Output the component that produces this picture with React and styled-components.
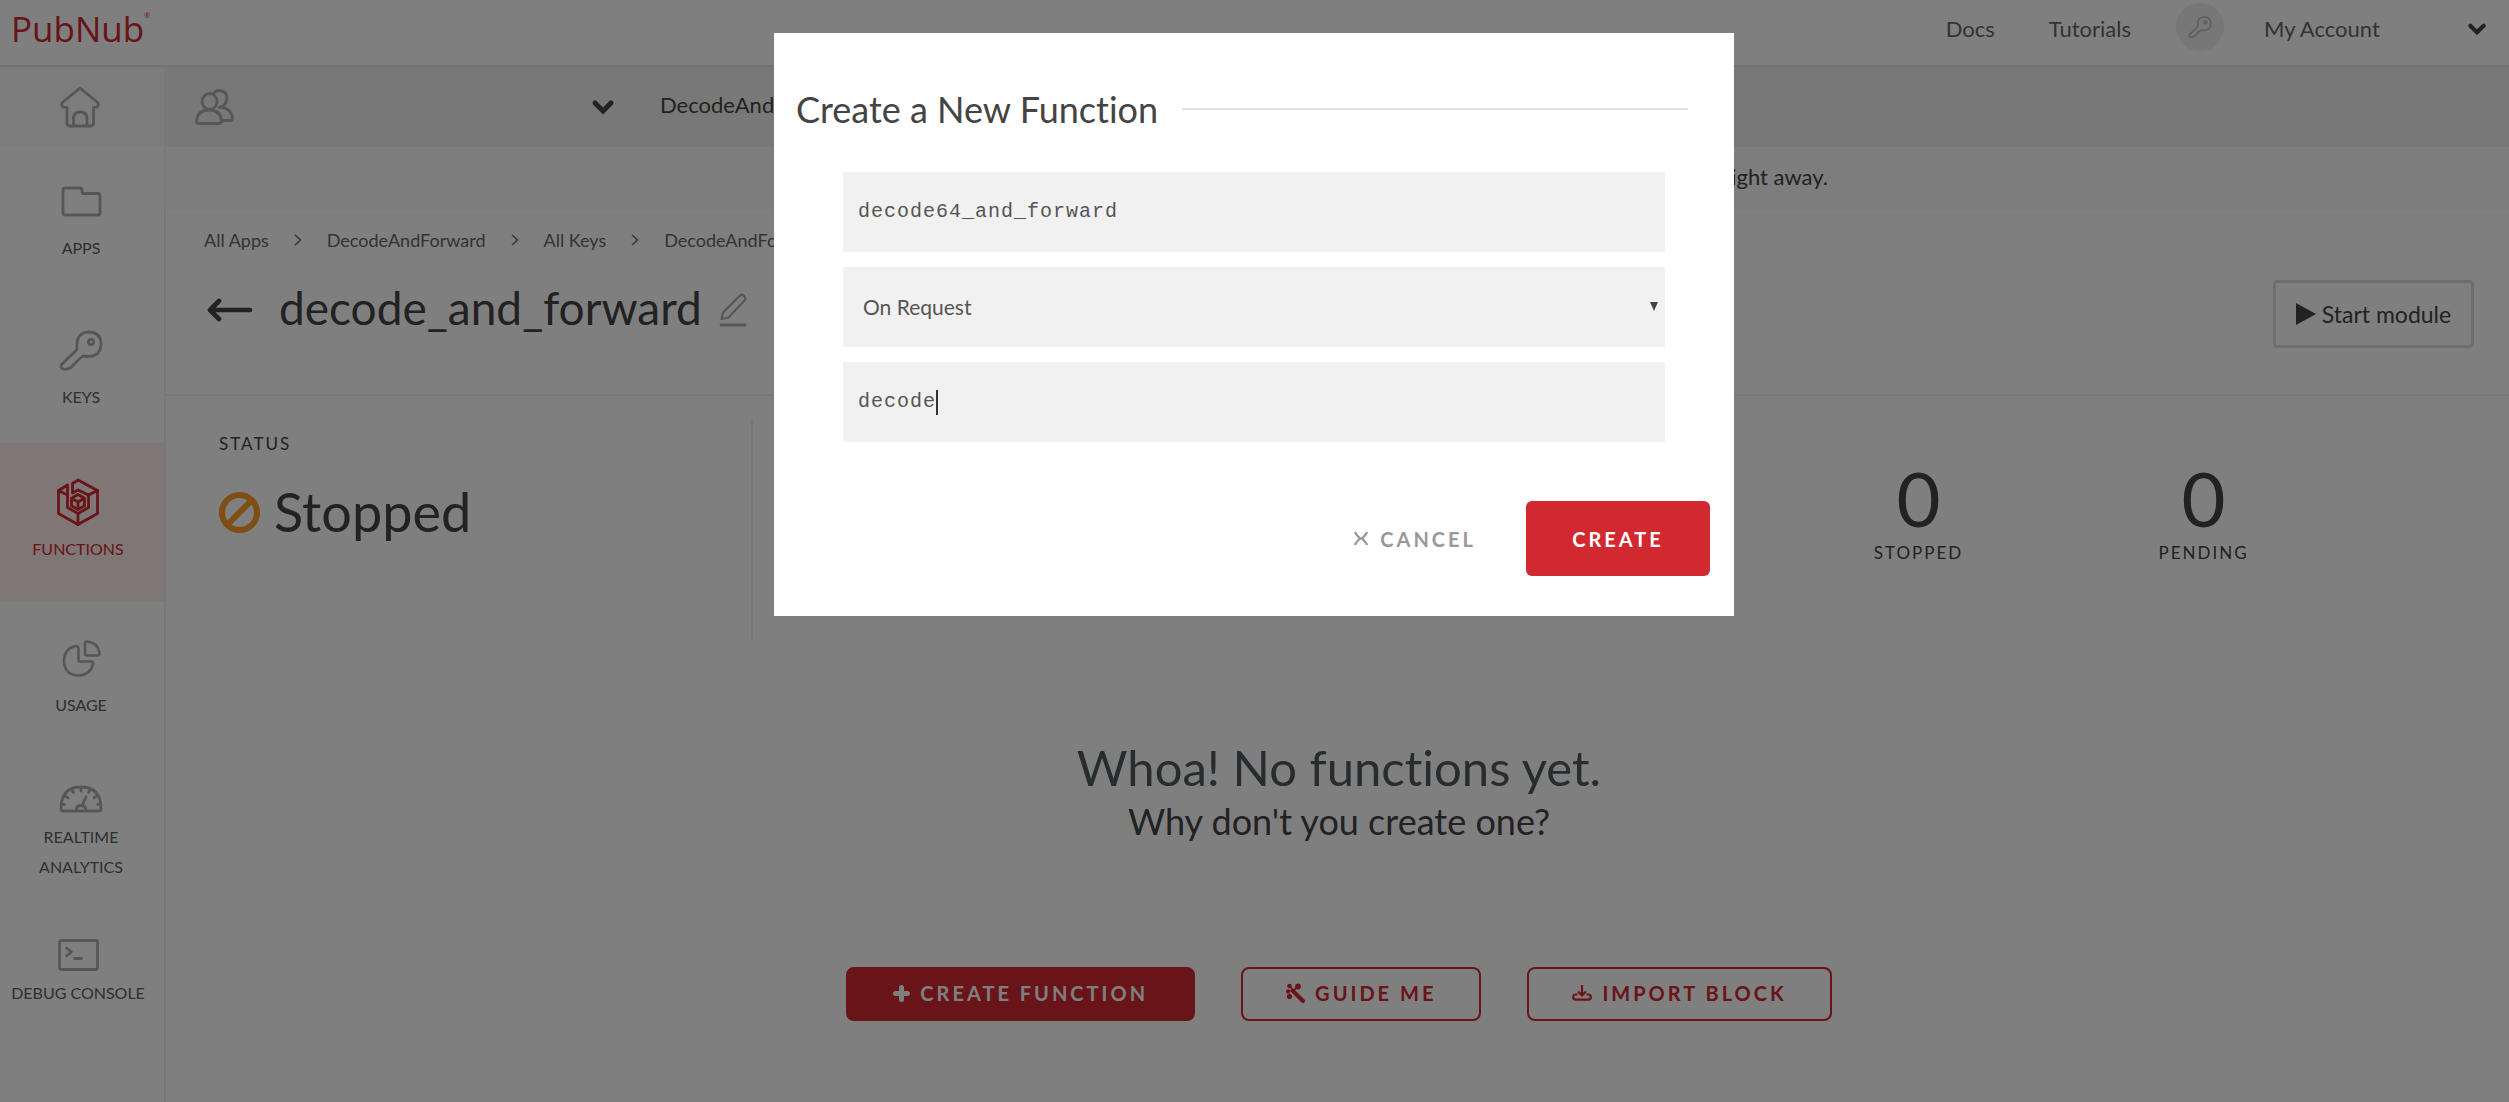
import React from "react";
import styled, { createGlobalStyle, css } from "styled-components";

const sans = `Lato, "Liberation Sans", sans-serif`;
const mono = `"Liberation Mono", monospace`;
const red = "#d22830";

const GlobalStyle = createGlobalStyle`
  *, *::before, *::after { box-sizing: border-box; }
  body {
    margin: 0;
    background: #fff;
    font-family: ${sans};
    font-variant-ligatures: none;
    color: #444;
  }
  button, input, select { font-family: inherit; color: inherit; margin: 0; }
  a { color: inherit; text-decoration: none; }
  svg { display: block; flex: none; }
`;

const Page = styled.div`
  min-height: 100vh;
  display: flex;
  flex-direction: column;
`;

/* ---------- top bar ---------- */

const TopBar = styled.header`
  display: flex;
  align-items: flex-start;
  justify-content: space-between;
  height: 67px;
  padding: 0 22px 0 11px;
  border-bottom: 2px solid #e4e4e4;
`;

const Logo = styled.a`
  display: flex;
  align-items: flex-start;
  font: 500 35px/57px "Open Sans", "Noto Sans", sans-serif;
  color: ${red};
  sup {
    font-size: 7px;
    line-height: 32px;
  }
`;

const TopNav = styled.nav`
  display: flex;
  align-items: center;
  height: 57px;
  font-size: 22px;
  color: #666;
`;

const DocsLink = styled.a`
  margin-right: 54px;
`;

const TutorialsLink = styled.a`
  margin-right: 45px;
`;

const Avatar = styled.span`
  display: flex;
  align-items: center;
  justify-content: center;
  width: 48px;
  height: 48px;
  margin: 0 40px 4px 0;
  border-radius: 50%;
  background: #eee;
`;

const AccountButton = styled.button`
  display: flex;
  align-items: center;
  justify-content: space-between;
  width: 223px;
  padding: 0;
  border: 0;
  background: none;
  font-size: 22px;
`;

/* ---------- side bar ---------- */

const Body = styled.div`
  display: flex;
  flex: 1;
`;

const SideBar = styled.nav`
  flex: none;
  width: 166px;
  border-right: 2px solid #f0f0f0;
`;

const HomeLink = styled.a`
  display: flex;
  align-items: center;
  height: 80px;
  padding-left: 60px;
  background: #f8f8f8;
  color: #adadad;
`;

const SideItem = styled.a`
  display: flex;
  flex-direction: column;
  align-items: center;
  gap: ${(p) => (p.$compact ? 0 : 8)}px;
  padding: ${(p) => p.$top}px ${(p) => (p.$shift ? 8 : 2)}px ${(p) => p.$bottom}px 0;
  font-size: 16px;
  line-height: 30px;
  text-align: center;
  white-space: nowrap;
  color: #606060;
  ${(p) =>
    p.$active &&
    css`
      background: #ffeded;
      color: ${red};
    `}
`;

const SideIcon = styled.span`
  display: flex;
  align-items: center;
  justify-content: center;
  height: ${(p) => (p.$compact ? 46 : 48)}px;
  color: ${(p) => (p.$active ? red : "#adadad")};
`;

/* ---------- main column ---------- */

const Main = styled.main`
  flex: 1;
  min-width: 0;
`;

const AppBar = styled.div`
  display: flex;
  align-items: center;
  height: 80px;
  padding-left: 29px;
  background: #f0f0f0;
`;

const TeamPicker = styled.button`
  display: flex;
  align-items: center;
  justify-content: space-between;
  width: 420px;
  padding: 0;
  border: 0;
  background: none;
  color: #adadad;
`;

const AppName = styled.span`
  margin-left: 45px;
  padding-bottom: 6px;
  font-size: 22px;
`;

const Notice = styled.div`
  height: 63px;
  padding-right: 681px;
  background: #fafafa;
  font-size: 22px;
  line-height: 59px;
  text-align: right;
`;

const ModuleHeader = styled.section`
  display: flex;
  justify-content: space-between;
  height: 186px;
  padding: 16px 35px 0 38px;
  border-bottom: 2px solid #f0f0f0;
`;

const Crumbs = styled.nav`
  display: flex;
  align-items: center;
  gap: 25px;
  height: 28px;
  font-size: 18px;
  color: #666;
`;

const TitleRow = styled.div`
  display: flex;
  align-items: center;
  height: 60px;
  margin-top: 26px;
  padding-left: 3px;
`;

const Title = styled.h1`
  margin: 0 17px 4px 26px;
  font-size: 46px;
  font-weight: 400;
  line-height: 60px;
`;

const PlainIconButton = styled.button`
  display: flex;
  padding: 0;
  border: 0;
  background: none;
`;

const StartButton = styled.button`
  display: flex;
  align-items: center;
  justify-content: center;
  gap: 6px;
  width: 201px;
  height: 68px;
  margin-top: 54px;
  padding: 0;
  border: 3px solid #dcdcdc;
  border-radius: 4px;
  background: none;
  font-size: 23px;
`;

const StatusRow = styled.section`
  display: flex;
  align-items: stretch;
  height: 221px;
  margin-top: 24px;
`;

const StatusPanel = styled.div`
  width: 587px;
  padding: 9px 0 0 53px;
  border-right: 2px solid #f0f0f0;
`;

const Caption = styled.div`
  font-size: 17px;
  line-height: 30px;
  letter-spacing: 2px;
`;

const StatusValue = styled.div`
  display: flex;
  align-items: center;
  gap: 14px;
  margin-top: 17px;
  font-size: 54px;
  line-height: 72px;
`;

const Stats = styled.div`
  display: flex;
  flex: 1;
  justify-content: flex-end;
  padding: 37px 163px 0 0;
`;

const Stat = styled.div`
  width: 285px;
  text-align: center;
`;

const StatValue = styled.div`
  font-size: 76px;
  line-height: 81px;
`;

const Empty = styled.section`
  display: flex;
  flex-direction: column;
  align-items: center;
  padding: 90px 0 0 3px;
`;

const EmptyTitle = styled.h2`
  margin: 0;
  font-size: 49px;
  font-weight: 400;
  line-height: 72px;
  color: #4f585e;
`;

const EmptyText = styled.p`
  margin: 0;
  font-size: 36px;
  line-height: 36px;
`;

const Actions = styled.div`
  display: flex;
  gap: 46px;
  margin-top: 128px;
`;

const Action = styled.button`
  display: flex;
  align-items: center;
  gap: 10px;
  height: 54px;
  padding: 0 ${(p) => (p.$solid ? 45 : 43)}px 2px;
  border: 2px solid ${red};
  border-radius: 8px;
  background: ${(p) => (p.$solid ? red : "none")};
  color: ${(p) => (p.$solid ? "#fff" : red)};
  font-size: 20px;
  font-weight: 700;
  letter-spacing: 3px;
`;

/* ---------- dialog ---------- */

const Backdrop = styled.div`
  position: fixed;
  inset: 0;
  display: flex;
  align-items: flex-start;
  justify-content: center;
  padding: 33px 1px 0 0;
  background: rgba(0, 0, 0, 0.5);
`;

const Dialog = styled.form`
  width: 960px;
  padding: 46px 24px 40px 22px;
  background: #fff;
`;

const DialogTitle = styled.h2`
  display: flex;
  align-items: center;
  gap: 24px;
  margin: 0 22px 0 0;
  font-size: 36px;
  font-weight: 400;
  line-height: 60px;
  &::after {
    content: "";
    flex: 1;
    height: 2px;
    background: #e2e2e2;
  }
`;

const Fields = styled.div`
  display: flex;
  flex-direction: column;
  gap: 15px;
  margin: 33px 45px 0 47px;
`;

const Field = styled.label`
  display: flex;
  align-items: center;
  height: 80px;
  padding: 0 7px 0 15px;
  background: #f1f1f1;
  color: #555;
`;

const TextInput = styled.input`
  field-sizing: content;
  padding: 0;
  border: 0;
  outline: 0;
  background: none;
  font: 400 20px/24px ${mono};
  letter-spacing: 1px;
  caret-color: transparent;
`;

const Caret = styled.span`
  width: 2px;
  height: 25px;
  background: #333;
`;

const Select = styled.select`
  flex: 1;
  appearance: none;
  padding: 0 0 0 5px;
  border: 0;
  outline: 0;
  background: none;
  font-size: 21px;
  line-height: 28px;
`;

const DialogActions = styled.div`
  display: flex;
  align-items: center;
  justify-content: flex-end;
  gap: 50px;
  margin-top: 59px;
`;

const CancelButton = styled.button`
  display: flex;
  align-items: center;
  gap: 12px;
  padding: 0;
  border: 0;
  background: none;
  color: #999;
  font-size: 20px;
  font-weight: 700;
  letter-spacing: 3px;
`;

const CreateButton = styled.button`
  width: 184px;
  height: 75px;
  padding: 0;
  border: 0;
  border-radius: 6px;
  background: ${red};
  color: #fff;
  font-size: 20px;
  font-weight: 700;
  letter-spacing: 3px;
`;

/* ---------- icons ---------- */

const Line = ({ w, h, sw = 2.8, children, ...rest }) => (
  <svg
    width={w}
    height={h}
    viewBox={`0 0 ${w} ${h}`}
    fill="none"
    stroke="currentColor"
    strokeWidth={sw}
    strokeLinecap="round"
    strokeLinejoin="round"
    aria-hidden="true"
    {...rest}
  >
    {children}
  </svg>
);

const HomeIcon = () => (
  <Line w={40} h={42}>
    <path d="M20 2 L37 16 Q39.500 18.500 37.500 20.500 Q36.500 21.500 33.500 21.500 V37 Q33.500 40 30.500 40 H10 Q7 40 7 37 V21.500 Q3.500 21.500 2.500 20.500 Q.5 18.500 3 16 Z" />
    <path d="M13.500 40 V32 Q14 26 20 26 Q26.500 26 27 32 V40" />
  </Line>
);

const FolderIcon = () => (
  <Line w={41} h={31}>
    <path d="M4 2 H19 Q21 2 21 4 V6 Q21 7.500 22.500 7.500 H37 Q39 7.500 39 9.500 V27 Q39 29 37 29 H4 Q2 29 2 27 V4 Q2 2 4 2 Z" />
  </Line>
);

const KeyShape = () => (
  <>
    <path d="M18 18 Q16.500 2.500 30 2 Q42 2.500 42 14 Q41.500 29 24 26 Q22.500 26.500 12 37.500 Q7 40.500 3 38.500 Q1 36 3 34 L17.500 20 Q18.200 19 18 18 Z" />
    <circle cx="32" cy="12" r="2.600" />
  </>
);

const KeyIcon = () => (
  <Line w={44} h={41}>
    <KeyShape />
  </Line>
);

const SmallKeyIcon = () => (
  <Line w={24} h={24} viewBox="0 0 44 41" style={{ color: "#b8b8b8" }}>
    <KeyShape />
  </Line>
);

const CubeIcon = () => (
  <Line w={42} h={48}>
    <path d="M15.500 15 V5.500 L21 2 L40.500 12.500 V35.500 L21 46.500 L1.500 35.500 V12.500 L10.500 7 V29.500 L21 35.500 L31.500 29.500 V17 L21 12 L15.500 15" />
    <path d="M21 35.500 V46.500 M31.500 17 L40.500 12.500 M1.500 12.500 L10.500 17" />
    <path d="M21 16.500 L27.500 20.300 V27.700 L21 31.500 L14.500 27.700 V20.300 Z M14.500 20.300 L21 24 L27.500 20.300 M21 24 V31.500" />
  </Line>
);

const PieIcon = () => (
  <Line w={39} h={37} sw={2.6}>
    <path d="M14 6 Q16.500 6 16.500 8.500 V20.500 Q16.500 21.500 17.500 21.500 H29.500 Q31.500 21.500 31 24 Q28.500 35 16.500 35.500 Q2.500 35 2 21 Q2.500 8 14 6 Z" />
    <path d="M23 3.500 Q23 1.500 25 1.500 Q36.500 3 37.500 13.500 Q37.500 15.500 35.500 15.500 H25 Q23 15.500 23 13.500 Z" />
  </Line>
);

const GaugeIcon = () => (
  <Line w={44} h={28}>
    <path d="M2 24 Q2 2 22 2 Q42 2 42 24 Q42 26 40 26 H4 Q2 26 2 24 Z" />
    <path d="M17 25 Q17.500 20.500 22 20.500 Q26.500 20.500 27 25 M23 21 L27 12" />
    <path d="M22 3 V6 M13 5 L14.500 7.500 M31 5 L29.500 7.500 M6.500 11 L9 13 M37.500 11 L35 13 M3 19 L5.500 19.500 M41 19 L38.500 19.500" />
  </Line>
);

const ConsoleIcon = () => (
  <Line w={41} h={32}>
    <rect x="1.500" y="1.500" width="38" height="29" rx="2" />
    <path d="M8.500 9 L13.500 13 L8.500 17 M16.500 19.500 H23.500" />
  </Line>
);

const TeamIcon = () => (
  <Line w={39} h={36} sw={2.8}>
    <ellipse cx="14.500" cy="12.500" rx="7.500" ry="8" />
    <path d="M1.500 32 Q2.500 21 14 21 Q25.500 21 26.500 32 Q26.500 34.500 24.500 34.500 H3.500 Q1.500 34.500 1.500 32 Z" />
    <path d="M19 4 Q21 1.500 24.500 1.500 Q32 2.500 32 9 Q31 17.500 24 18.500 M26 18 Q36.500 20 37.500 29 Q37.500 31.500 35.500 31.500 H28" />
  </Line>
);

const DownIcon = ({ w = 24, h = 16, sw = 5 }) => (
  <Line w={w} h={h} sw={sw} viewBox="0 0 24 16" strokeLinejoin="miter" style={{ color: "#444" }}>
    <path d="M4 4 L12 12 L20 4" />
  </Line>
);

const CrumbIcon = () => (
  <Line w={8} h={12} sw={1.4} strokeLinecap="butt" strokeLinejoin="miter">
    <path d="M1 1 L6.500 6 L1 11" />
  </Line>
);

const BackIcon = () => (
  <Line w={46} h={24} sw={4.6}>
    <path d="M43 12 H4 M12 3 L3 12 L12 21" />
  </Line>
);

const PencilIcon = () => (
  <Line w={28} h={34} sw={2.2} style={{ color: "#adadad" }}>
    <path d="M2.500 26 L4 19.500 L21 2.500 Q23 1 24.500 2.500 L26 4.500 Q27 6 25.500 7.500 L9.500 24.500 Z" />
    <path d="M2 32 H26" strokeWidth="2.800" />
  </Line>
);

const PlayIcon = () => (
  <svg width="20" height="22" viewBox="0 0 20 22" fill="#444" aria-hidden="true">
    <path d="M0 0 L20 11 L0 22 Z" />
  </svg>
);

const StoppedIcon = () => (
  <Line w={41} h={41} sw={6} style={{ color: "#ff9c28" }}>
    <circle cx="20.500" cy="20.500" r="17.500" />
    <path d="M9 32 L32 9" />
  </Line>
);

const PlusIcon = () => (
  <Line w={17} h={17} sw={5}>
    <path d="M8.500 2.500 V14.500 M2.500 8.500 H14.500" />
  </Line>
);

const WandIcon = () => (
  <svg width="19" height="20" viewBox="0 0 19 20" fill="currentColor" stroke="currentColor" aria-hidden="true">
    <path d="M6.500 7.500 L17 18" strokeWidth="4" strokeLinecap="round" />
    <circle cx="3.500" cy="3" r="2.300" stroke="none" />
    <circle cx="12" cy="3.500" r="2.900" stroke="none" />
    <circle cx="2.200" cy="8.500" r="2.200" stroke="none" />
    <circle cx="3.500" cy="13.500" r="2.600" stroke="none" />
    <path d="M4 3.500 L7.500 7.500 L11.500 4" fill="none" strokeWidth="1.800" />
  </svg>
);

const ImportIcon = () => (
  <svg width="20" height="16" viewBox="0 0 20 16" fill="none" stroke="currentColor" strokeWidth="2.200" aria-hidden="true">
    <path d="M10 0 V10 M6 6.500 L10 10.500 L14 6.500" />
    <path d="M5.500 9.500 H3.500 Q1.200 9.500 1.200 12 Q1.200 14.600 3.500 14.600 H16.500 Q18.800 14.600 18.800 12 Q18.800 9.500 16.500 9.500 H14.500" />
  </svg>
);

const CrossIcon = () => (
  <Line w={14} h={15} sw={2.4} strokeLinecap="butt">
    <path d="M1 1 Q1.500 3 6 7.500 Q1.500 12 1 14 M13 1 Q12.500 3 8 7.500 Q12.500 12 13 14 M6 7.500 H8" />
  </Line>
);

const ArrowMark = () => (
  <svg width="8" height="10" viewBox="0 0 8 10" fill="#444" aria-hidden="true">
    <path d="M0 0 H8 L4 9 Z" />
  </svg>
);

/* ---------- page ---------- */

const sideItems = [
  { label: "APPS", Icon: FolderIcon, top: 30, bottom: 28 },
  { label: "KEYS", Icon: KeyIcon, top: 35, bottom: 31 },
  { label: "FUNCTIONS", Icon: CubeIcon, top: 35, bottom: 37, active: true, shift: true },
  { label: "USAGE", Icon: PieIcon, top: 33, bottom: 28 },
  { label: <>REALTIME<br />ANALYTICS</>, key: "REALTIME", Icon: GaugeIcon, top: 28, bottom: 30, compact: true },
  { label: "DEBUG CONSOLE", Icon: ConsoleIcon, top: 20, bottom: 28, compact: true, shift: true },
];

const crumbs = ["All Apps", "DecodeAndForward", "All Keys", "DecodeAndForward"];

export default function App() {
  const [name, setName] = React.useState("decode64_and_forward");
  const [path, setPath] = React.useState("decode");

  return (
    <>
      <GlobalStyle />
      <Page>
        <TopBar>
          <Logo href="#">
            PubNub<sup>®</sup>
          </Logo>
          <TopNav>
            <DocsLink href="#">Docs</DocsLink>
            <TutorialsLink href="#">Tutorials</TutorialsLink>
            <Avatar>
              <SmallKeyIcon />
            </Avatar>
            <AccountButton type="button">
              My Account
              <DownIcon w={20} h={14} />
            </AccountButton>
          </TopNav>
        </TopBar>

        <Body>
          <SideBar>
            <HomeLink href="#" aria-label="Home">
              <HomeIcon />
            </HomeLink>
            {sideItems.map(({ label, key, Icon, top, bottom, active, compact, shift }) => (
              <SideItem
                key={key || label}
                href="#"
                $top={top}
                $bottom={bottom}
                $active={active}
                $compact={compact}
                $shift={shift}
              >
                <SideIcon $active={active} $compact={compact}>
                  <Icon />
                </SideIcon>
                <span>{label}</span>
              </SideItem>
            ))}
          </SideBar>

          <Main>
            <AppBar>
              <TeamPicker type="button" aria-label="Team">
                <TeamIcon />
                <DownIcon />
              </TeamPicker>
              <AppName>DecodeAnd</AppName>
            </AppBar>
            <Notice>right away.</Notice>

            <ModuleHeader>
              <div>
                <Crumbs>
                  {crumbs.map((c, i) => (
                    <React.Fragment key={i}>
                      {i > 0 && <CrumbIcon />}
                      <a href="#">{c}</a>
                    </React.Fragment>
                  ))}
                </Crumbs>
                <TitleRow>
                  <PlainIconButton type="button" aria-label="Back">
                    <BackIcon />
                  </PlainIconButton>
                  <Title>decode_and_forward</Title>
                  <PlainIconButton type="button" aria-label="Rename">
                    <PencilIcon />
                  </PlainIconButton>
                </TitleRow>
              </div>
              <StartButton type="button">
                <PlayIcon />
                Start module
              </StartButton>
            </ModuleHeader>

            <StatusRow>
              <StatusPanel>
                <Caption>STATUS</Caption>
                <StatusValue>
                  <StoppedIcon />
                  Stopped
                </StatusValue>
              </StatusPanel>
              <Stats>
                <Stat>
                  <StatValue>0</StatValue>
                  <Caption>STOPPED</Caption>
                </Stat>
                <Stat>
                  <StatValue>0</StatValue>
                  <Caption>PENDING</Caption>
                </Stat>
              </Stats>
            </StatusRow>

            <Empty>
              <EmptyTitle>Whoa! No functions yet.</EmptyTitle>
              <EmptyText>Why don't you create one?</EmptyText>
              <Actions>
                <Action type="button" $solid>
                  <PlusIcon />
                  CREATE FUNCTION
                </Action>
                <Action type="button">
                  <WandIcon />
                  GUIDE ME
                </Action>
                <Action type="button">
                  <ImportIcon />
                  IMPORT BLOCK
                </Action>
              </Actions>
            </Empty>
          </Main>
        </Body>
      </Page>

      <Backdrop>
        <Dialog role="dialog" aria-labelledby="dialog-title" onSubmit={(e) => e.preventDefault()}>
          <DialogTitle id="dialog-title">Create a New Function</DialogTitle>
          <Fields>
            <Field>
              <TextInput aria-label="Function name" value={name} onChange={(e) => setName(e.target.value)} />
            </Field>
            <Field>
              <Select aria-label="Event type" defaultValue="request">
                <option value="request">On Request</option>
              </Select>
              <ArrowMark />
            </Field>
            <Field>
              <TextInput aria-label="Path" value={path} onChange={(e) => setPath(e.target.value)} />
              <Caret />
            </Field>
          </Fields>
          <DialogActions>
            <CancelButton type="button">
              <CrossIcon />
              CANCEL
            </CancelButton>
            <CreateButton type="submit">CREATE</CreateButton>
          </DialogActions>
        </Dialog>
      </Backdrop>
    </>
  );
}
